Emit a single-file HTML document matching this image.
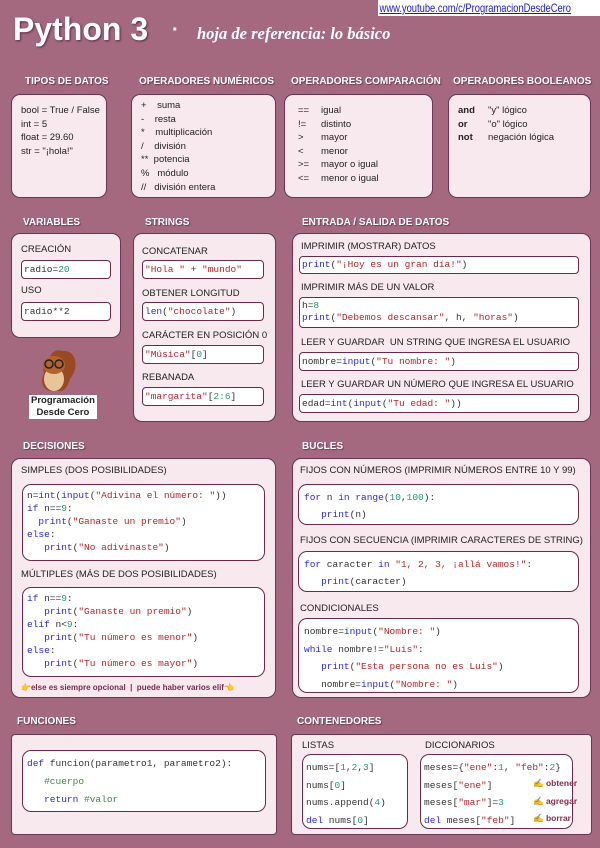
<!DOCTYPE html>
<html><head><meta charset="utf-8">
<style>
*{margin:0;padding:0;box-sizing:border-box}
body{width:600px;height:848px;background:#a4697f;position:relative;overflow:hidden;font-family:"Liberation Sans",sans-serif;color:#222}
.a{position:absolute;white-space:nowrap}
.h{position:absolute;color:#fff;font-weight:bold;font-size:10px;text-shadow:1px 1px 1px #6a3a50;white-space:nowrap}
.p{position:absolute;background:#f7e9ee;border:1px solid #6c3553;border-radius:9px}
.c{position:absolute;background:#fff;border:1px solid #6c2a4a;border-radius:4px}
.cr{border-radius:9px}
.t{position:absolute;font-size:9.5px;color:#222;white-space:nowrap}
.m{position:absolute;font-family:"Liberation Mono",monospace;font-size:9.5px;color:#333;white-space:nowrap}
.s{color:#b3262a}.k{color:#2a2ad8}.n{color:#1f9a6a}.g{color:#3d8a3d}
</style></head><body>
<div class="a" style="left:378px;top:0;width:222px;height:16px;background:#fff;overflow:hidden"><div style="color:#1a1ad0;font-size:12px;text-decoration:underline;line-height:16px;transform:scaleX(0.78);transform-origin:0 0;padding-left:2px">www.youtube.com/c/ProgramacionDesdeCero</div></div>
<div class="a" style="left:13px;top:11px;color:#fff;font-size:32px;font-weight:bold;text-shadow:1px 1px 2px #5a2a40">Python 3</div>
<div class="a" style="left:172px;top:19px;color:#fff;font-size:20px;font-weight:bold">·</div>
<div class="a" style="left:197px;top:24px;color:#fff;font-size:16.5px;font-style:italic;font-family:'Liberation Serif',serif;font-weight:bold">hoja de referencia: lo básico</div>

<div class="h" style="left:25px;top:76px">TIPOS DE DATOS</div>
<div class="h" style="left:139px;top:76px">OPERADORES NUMÉRICOS</div>
<div class="h" style="left:291px;top:76px">OPERADORES COMPARACIÓN</div>
<div class="h" style="left:453px;top:76px">OPERADORES BOOLEANOS</div>

<div class="p" style="left:11px;top:94px;width:96px;height:104px"></div>
<div class="t" style="left:21px;top:104px;line-height:13.5px">bool = True / False<br>int = 5<br>float = 29.60<br>str = "¡hola!"</div>
<div class="p" style="left:131px;top:94px;width:145px;height:104px"></div>
<div class="t" style="left:141px;top:99px;line-height:13.6px;font-size:9.5px">+&nbsp;&nbsp;&nbsp;&nbsp;suma<br>-&nbsp;&nbsp;&nbsp;&nbsp;resta<br>*&nbsp;&nbsp;&nbsp;&nbsp;multiplicación<br>/&nbsp;&nbsp;&nbsp;&nbsp;división<br>**&nbsp;&nbsp;potencia<br>%&nbsp;&nbsp;&nbsp;módulo<br>//&nbsp;&nbsp;&nbsp;división entera</div>
<div class="p" style="left:284px;top:94px;width:149px;height:104px"></div>
<div class="t" style="left:298px;top:104px;line-height:13.6px">==<br>!=<br>&gt;<br>&lt;<br>&gt;=<br>&lt;=</div>
<div class="t" style="left:321px;top:104px;line-height:13.6px">igual<br>distinto<br>mayor<br>menor<br>mayor o igual<br>menor o igual</div>
<div class="p" style="left:448px;top:94px;width:143px;height:104px"></div>
<div class="t" style="left:458px;top:104px;line-height:13.6px;font-weight:bold">and<br>or<br>not</div>
<div class="t" style="left:488px;top:104px;line-height:13.6px">"y" lógico<br>"o" lógico<br>negación lógica</div>

<div class="h" style="left:23px;top:217px">VARIABLES</div>
<div class="h" style="left:145px;top:217px">STRINGS</div>
<div class="h" style="left:302px;top:217px">ENTRADA / SALIDA DE DATOS</div>

<div class="p" style="left:11px;top:233px;width:110px;height:105px"></div>
<div class="t" style="left:21px;top:244px">CREACIÓN</div>
<div class="c" style="left:21px;top:260px;width:90px;height:19px"></div>
<div class="m" style="left:24px;top:264px">radio=<span class="n">20</span></div>
<div class="t" style="left:21px;top:285px">USO</div>
<div class="c" style="left:21px;top:302px;width:90px;height:19px"></div>
<div class="m" style="left:24px;top:306px">radio**2</div>

<div class="p" style="left:133px;top:233px;width:143px;height:189px"></div>
<div class="t" style="left:142px;top:246px">CONCATENAR</div>
<div class="c" style="left:142px;top:260px;width:122px;height:19px"></div>
<div class="m" style="left:145px;top:264px"><span class="s">"Hola "</span> + <span class="s">"mundo"</span></div>
<div class="t" style="left:142px;top:288px">OBTENER LONGITUD</div>
<div class="c" style="left:142px;top:302px;width:122px;height:19px"></div>
<div class="m" style="left:145px;top:306px"><span class="k">len</span>(<span class="s">"chocolate"</span>)</div>
<div class="t" style="left:142px;top:330px">CARÁCTER EN POSICIÓN 0</div>
<div class="c" style="left:142px;top:345px;width:122px;height:19px"></div>
<div class="m" style="left:145px;top:349px"><span class="s">"Música"</span>[<span class="n">0</span>]</div>
<div class="t" style="left:142px;top:372px">REBANADA</div>
<div class="c" style="left:142px;top:387px;width:122px;height:19px"></div>
<div class="m" style="left:145px;top:391px"><span class="s">"margarita"</span>[<span class="n">2:6</span>]</div>

<div class="p" style="left:292px;top:233px;width:299px;height:189px"></div>
<div class="t" style="left:301px;top:241px">IMPRIMIR (MOSTRAR) DATOS</div>
<div class="c" style="left:299px;top:256px;width:280px;height:18px"></div>
<div class="m" style="left:302px;top:259px"><span class="k">print</span>(<span class="s">"¡Hoy es un gran día!"</span>)</div>
<div class="t" style="left:301px;top:282px">IMPRIMIR MÁS DE UN VALOR</div>
<div class="c" style="left:299px;top:297px;width:280px;height:31px"></div>
<div class="m" style="left:302px;top:300px;line-height:12px">h=<span class="n">8</span><br><span class="k">print</span>(<span class="s">"Debemos descansar"</span>, h, <span class="s">"horas"</span>)</div>
<div class="t" style="left:301px;top:337px">LEER Y GUARDAR&nbsp; UN STRING QUE INGRESA EL USUARIO</div>
<div class="c" style="left:299px;top:352px;width:280px;height:19px"></div>
<div class="m" style="left:302px;top:356px">nombre=<span class="k">input</span>(<span class="s">"Tu nombre: "</span>)</div>
<div class="t" style="left:301px;top:379px">LEER Y GUARDAR UN NÚMERO QUE INGRESA EL USUARIO</div>
<div class="c" style="left:299px;top:394px;width:280px;height:19px"></div>
<div class="m" style="left:302px;top:398px">edad=<span class="k">int</span>(<span class="k">input</span>(<span class="s">"Tu edad: "</span>))</div>

<svg class="a" style="left:32px;top:345px" width="48" height="50" viewBox="0 0 48 50">
<path d="M30 6 C44 4 48 22 38 34 C36 40 34 44 30 46 L18 46 C10 44 8 36 12 28 C10 22 12 14 18 12 C20 6 26 4 30 6Z" fill="#9a4a22"/>
<ellipse cx="22" cy="34" rx="10" ry="12" fill="#e8c49a"/>
<ellipse cx="22" cy="20" rx="11" ry="9" fill="#b5622e"/>
<circle cx="17" cy="19" r="4" fill="none" stroke="#222" stroke-width="1.5"/>
<circle cx="27" cy="19" r="4" fill="none" stroke="#222" stroke-width="1.5"/>
</svg>
<div class="a" style="left:29px;top:395px;background:#fff;color:#222;font-size:9.5px;font-weight:bold;text-align:center;line-height:12px;padding:0 2px">Programación<br>Desde Cero</div>

<div class="h" style="left:23px;top:441px">DECISIONES</div>
<div class="h" style="left:302px;top:441px">BUCLES</div>

<div class="p" style="left:11px;top:458px;width:265px;height:240px"></div>
<div class="t" style="left:21px;top:465px">SIMPLES (DOS POSIBILIDADES)</div>
<div class="c cr" style="left:22px;top:484px;width:243px;height:77px"></div>
<div class="m" style="left:27px;top:489px;line-height:13px">n=<span class="k">int</span>(<span class="k">input</span>(<span class="s">"Adivina el número: "</span>))<br><span class="k">if</span> n==<span class="n">9</span>:<br>&nbsp;&nbsp;<span class="k">print</span>(<span class="s">"Ganaste un premio"</span>)<br><span class="k">else</span>:<br>&nbsp;&nbsp;&nbsp;<span class="k">print</span>(<span class="s">"No adivinaste"</span>)</div>
<div class="t" style="left:21px;top:569px">MÚLTIPLES (MÁS DE DOS POSIBILIDADES)</div>
<div class="c cr" style="left:22px;top:587px;width:243px;height:90px"></div>
<div class="m" style="left:27px;top:592px;line-height:13px"><span class="k">if</span> n==<span class="n">9</span>:<br>&nbsp;&nbsp;&nbsp;<span class="k">print</span>(<span class="s">"Ganaste un premio"</span>)<br><span class="k">elif</span> n&lt;<span class="n">9</span>:<br>&nbsp;&nbsp;&nbsp;<span class="k">print</span>(<span class="s">"Tu número es menor"</span>)<br><span class="k">else</span>:<br>&nbsp;&nbsp;&nbsp;<span class="k">print</span>(<span class="s">"Tu número es mayor"</span>)</div>
<div class="t" style="left:21px;top:683px;font-size:8px;font-weight:bold;color:#7a2a55"><span style="color:#f0b400">👉</span>else es siempre opcional&nbsp; |&nbsp; puede haber varios elif<span style="color:#f0b400">👈</span></div>

<div class="p" style="left:292px;top:458px;width:299px;height:240px"></div>
<div class="t" style="left:300px;top:465px">FIJOS CON NÚMEROS (IMPRIMIR NÚMEROS ENTRE 10 Y 99)</div>
<div class="c cr" style="left:298px;top:484px;width:281px;height:41px"></div>
<div class="m" style="left:304px;top:489px;line-height:17px"><span class="k">for</span> n <span class="k">in</span> <span class="k">range</span>(<span class="n">10</span>,<span class="n">100</span>):<br>&nbsp;&nbsp;&nbsp;<span class="k">print</span>(n)</div>
<div class="t" style="left:300px;top:535px">FIJOS CON SECUENCIA (IMPRIMIR CARACTERES DE STRING)</div>
<div class="c cr" style="left:298px;top:551px;width:281px;height:41px"></div>
<div class="m" style="left:304px;top:556px;line-height:17px"><span class="k">for</span> caracter <span class="k">in</span> <span class="s">"1, 2, 3, ¡allá vamos!"</span>:<br>&nbsp;&nbsp;&nbsp;<span class="k">print</span>(caracter)</div>
<div class="t" style="left:300px;top:603px">CONDICIONALES</div>
<div class="c cr" style="left:298px;top:618px;width:281px;height:75px"></div>
<div class="m" style="left:304px;top:623px;line-height:17.5px">nombre=<span class="k">input</span>(<span class="s">"Nombre: "</span>)<br><span class="k">while</span> nombre!=<span class="s">"Luis"</span>:<br>&nbsp;&nbsp;&nbsp;<span class="k">print</span>(<span class="s">"Esta persona no es Luis"</span>)<br>&nbsp;&nbsp;&nbsp;nombre=<span class="k">input</span>(<span class="s">"Nombre: "</span>)</div>

<div class="h" style="left:17px;top:716px">FUNCIONES</div>
<div class="h" style="left:297px;top:716px">CONTENEDORES</div>

<div class="p" style="left:11px;top:734px;width:266px;height:101px;border-radius:4px"></div>
<div class="c cr" style="left:22px;top:750px;width:244px;height:62px"></div>
<div class="m" style="left:27px;top:755px;line-height:18px"><span class="k">def</span> funcion(parametro1, parametro2):<br>&nbsp;&nbsp;&nbsp;<span class="g">#cuerpo</span><br>&nbsp;&nbsp;&nbsp;<span class="k">return</span> <span class="g">#valor</span></div>

<div class="p" style="left:291px;top:734px;width:301px;height:101px;border-radius:4px"></div>
<div class="t" style="left:302px;top:740px">LISTAS</div>
<div class="t" style="left:425px;top:740px">DICCIONARIOS</div>
<div class="c cr" style="left:302px;top:754px;width:106px;height:75px"></div>
<div class="m" style="left:306px;top:759px;line-height:17.5px">nums=[<span class="n">1</span>,<span class="n">2</span>,<span class="n">3</span>]<br>nums[<span class="n">0</span>]<br>nums.append(<span class="n">4</span>)<br><span class="k">del</span> nums[<span class="n">0</span>]</div>
<div class="c cr" style="left:420px;top:754px;width:153px;height:75px"></div>
<div class="m" style="left:424px;top:759px;line-height:17.5px">meses={<span class="s">"ene"</span>:<span class="n">1</span>, <span class="s">"feb"</span>:<span class="n">2</span>}<br>meses[<span class="s">"ene"</span>]<br>meses[<span class="s">"mar"</span>]=<span class="n">3</span><br><span class="k">del</span> meses[<span class="s">"feb"</span>]</div>
<div class="t" style="left:533px;top:775px;line-height:17.5px;font-size:8.5px;font-weight:bold;color:#8a2a4a"><span style="color:#e8b800">✍</span> obtener<br><span style="color:#e8b800">✍</span> agregar<br><span style="color:#e8b800">✍</span> borrar</div>
</body></html>
